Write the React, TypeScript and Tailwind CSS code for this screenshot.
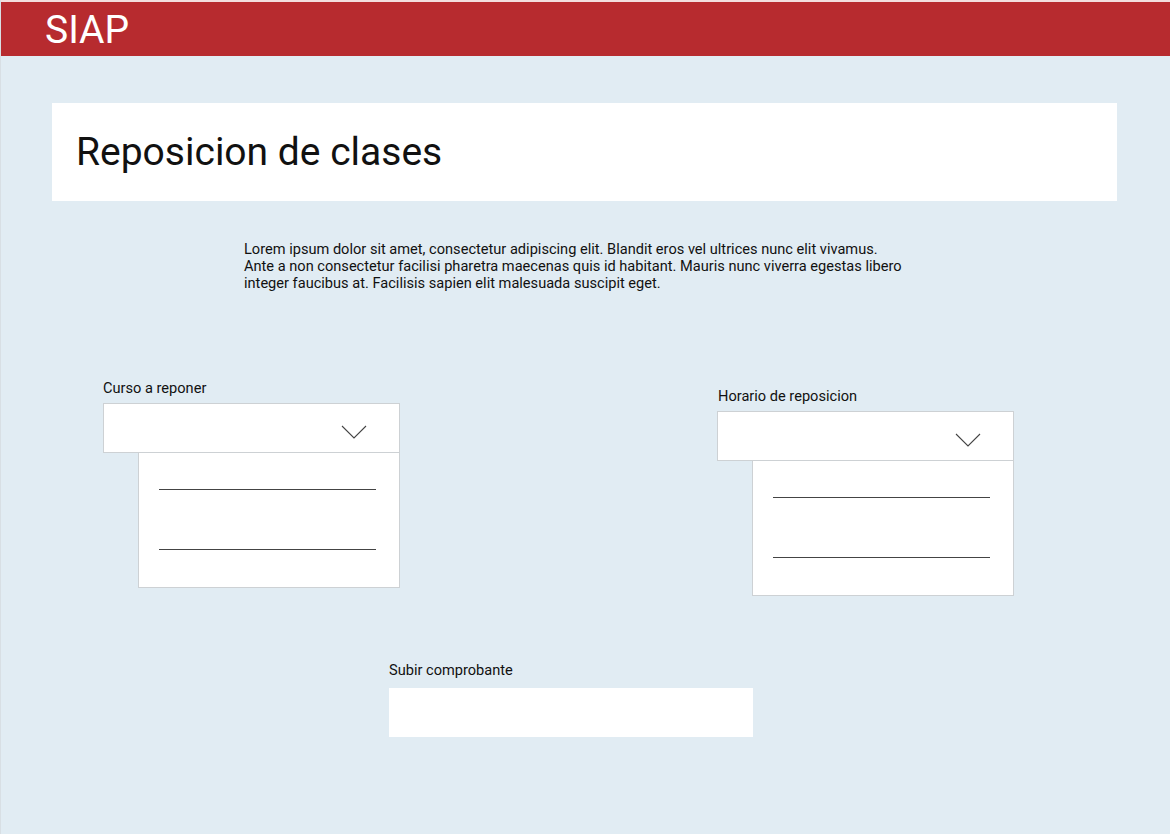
import React from 'react';

const Chevron = () => (
  <svg width="26" height="14" viewBox="0 0 26 14" fill="none" className="absolute right-[32px] top-[21px]">
    <path d="M1 1 L13 13 L25 1" stroke="#444" strokeWidth="1.1" />
  </svg>
);

const Dropdown = ({ label, indent }: { label: string; indent?: boolean }) => (
  <div className="w-[297px]">
    <div className={indent ? 'text-[14.6px] leading-[17px] text-[#111] mb-[6px] pl-px' : 'text-[14.6px] leading-[17px] text-[#111] mb-[6px]'}>
      {label}
    </div>
    <div className="relative h-[50px] bg-white border border-[#cdd1d4]">
      <Chevron />
    </div>
    <div className="ml-[35px] h-[135px] bg-white border border-t-0 border-[#cdd1d4] pl-[20px] pt-[36px]">
      <div className="w-[217px] border-t border-[#444]" />
      <div className="w-[217px] border-t border-[#444] mt-[59px]" />
    </div>
  </div>
);

export default function App() {
  return (
    <div className="min-h-[834px] bg-[#e1ecf3] border-l border-[#d8dfe4]" style={{ fontFamily: 'Roboto, "Liberation Sans", sans-serif' }}>
      <header className="border-t-2 border-[#f3dede] bg-[#b72b2f] h-[56px] pl-[44px] flex items-center">
        <span className="text-white text-[39px] leading-none pt-[3px]">SIAP</span>
      </header>

      <main className="pl-[51px] pr-[53px] pt-[47px]">
        <div className="bg-white h-[98px] flex items-center pl-[24px]">
          <h1 className="text-[39px] text-[#111] leading-none">Reposicion de clases</h1>
        </div>

        <p className="mt-[40px] ml-[192px] w-[720px] text-[14.6px] leading-[17px] text-[#111]">
          Lorem ipsum dolor sit amet, consectetur adipiscing elit. Blandit eros vel ultrices nunc elit vivamus.
          <br />
          Ante a non consectetur facilisi pharetra maecenas quis id habitant. Mauris nunc viverra egestas libero
          <br />
          integer faucibus at. Facilisis sapien elit malesuada suscipit eget.
        </p>

        <div className="flex mt-[88px]">
          <div className="ml-[51px]">
            <Dropdown label="Curso a reponer" />
          </div>
          <div className="ml-[317px] mt-[8px]">
            <Dropdown label="Horario de reposicion" indent />
          </div>
        </div>

        <div className="ml-[337px] mt-[66px] w-[364px]">
          <div className="text-[14.6px] leading-[17px] text-[#111] mb-[9px]">Subir comprobante</div>
          <div className="h-[49px] bg-white" />
        </div>
      </main>
    </div>
  );
}
